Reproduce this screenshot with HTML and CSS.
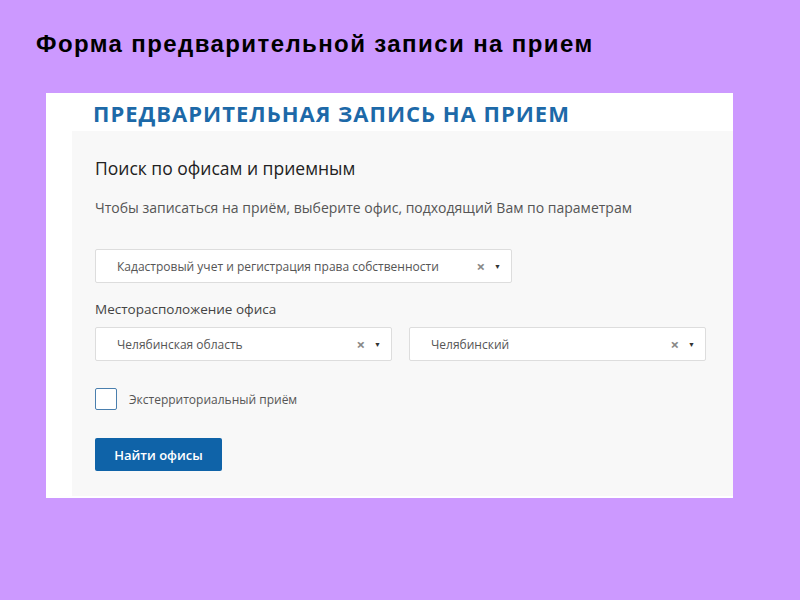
FILE: index.html
```html
<!DOCTYPE html>
<html lang="ru">
<head>
  <meta charset="UTF-8">
  <title>Форма предварительной записи на прием</title>
  <link rel="stylesheet" href="styles.css">
</head>
<body>

  <h1 class="slide-title">Форма предварительной записи на прием</h1>

  <!-- screenshot of the form -->
  <div class="shot">
    <div class="shot-head">ПРЕДВАРИТЕЛЬНАЯ ЗАПИСЬ НА ПРИЕМ</div>

    <div class="shot-body">
      <h2 class="search-title">Поиск по офисам и приемным</h2>
      <p class="hint">Чтобы записаться на приём, выберите офис, подходящий Вам по параметрам</p>

      <div class="select wide">
        <span class="select-text">Кадастровый учет и регистрация права собственности</span>
        <span class="select-clear">×</span>
        <span class="select-arrow">▼</span>
      </div>

      <div class="label">Месторасположение офиса</div>

      <div class="select-row">
        <div class="select half">
          <span class="select-text">Челябинская область</span>
          <span class="select-clear">×</span>
          <span class="select-arrow">▼</span>
        </div>
        <div class="select half">
          <span class="select-text">Челябинский</span>
          <span class="select-clear">×</span>
          <span class="select-arrow">▼</span>
        </div>
      </div>

      <label class="check">
        <span class="check-box"></span>
        <span class="check-text">Экстерриториальный приём</span>
      </label>

      <button class="find-btn">Найти офисы</button>
    </div>
  </div>

</body>
</html>
```

FILE: styles.css
```css
body {
  margin: 0;
  width: 800px;
  height: 600px;
  background-color: #cc99ff;
  font-family: "Open Sans", sans-serif;
  overflow: hidden;
}

.slide-title {
  margin: 0;
  padding: 30px 0 0 36px;
  height: 93px;
  box-sizing: border-box;
  font-family: "Liberation Sans", Arial, sans-serif;
  font-size: 24px;
  font-weight: bold;
  letter-spacing: 1.4px;
  line-height: 28px;
  color: #000;
}

/* Screenshot panel */
.shot {
  margin-left: 46px;
  width: 687px;
  height: 405px;
  background: #fff;
  display: flex;
  flex-direction: column;
}

.shot-head {
  height: 38px;
  padding: 8px 0 0 47px;
  box-sizing: border-box;
  font-size: 22px;
  font-weight: 700;
  letter-spacing: 1px;
  color: #1d69a8;
  line-height: 24px;
}

.shot-body {
  flex: 1;
  margin-left: 26px;
  margin-bottom: 2px;
  padding: 26px 0 0 23px;
  background: #f8f8f8;
}

.search-title {
  margin: 0;
  font-size: 17.5px;
  font-weight: 400;
  color: #222;
  line-height: 22px;
}

.hint {
  margin: 20px 0 0;
  font-size: 14px;
  color: #555;
  line-height: 18px;
}

.select {
  height: 34px;
  box-sizing: border-box;
  background: #fff;
  border: 1px solid #ddd;
  border-radius: 2px;
  display: flex;
  align-items: center;
  padding: 0 10px 0 21px;
  font-size: 12px;
  color: #555;
}

.select.wide {
  margin-top: 32px;
  width: 417px;
}

.select.half {
  width: 297px;
}

.select-text {
  flex: 1;
}

.select-clear {
  font-size: 15px;
  font-weight: 700;
  color: #888;
  margin-right: 9px;
}

.select-arrow {
  font-size: 7px;
  color: #333;
}

.label {
  margin-top: 17px;
  font-size: 13.5px;
  color: #444;
  line-height: 18px;
}

.select-row {
  margin-top: 9px;
  display: flex;
  gap: 17px;
}

.check {
  margin-top: 27px;
  display: flex;
  align-items: center;
  gap: 12px;
}

.check-box {
  width: 22px;
  height: 22px;
  box-sizing: border-box;
  border: 1px solid #4a7fae;
  border-radius: 2px;
  background: #fff;
}

.check-text {
  font-size: 12px;
  color: #555;
}

.find-btn {
  display: block;
  margin-top: 28px;
  width: 127px;
  height: 33px;
  border: none;
  border-radius: 2px;
  background: #0f63a8;
  color: #fff;
  font-family: "Open Sans", sans-serif;
  font-size: 13px;
  font-weight: 600;
}
```
